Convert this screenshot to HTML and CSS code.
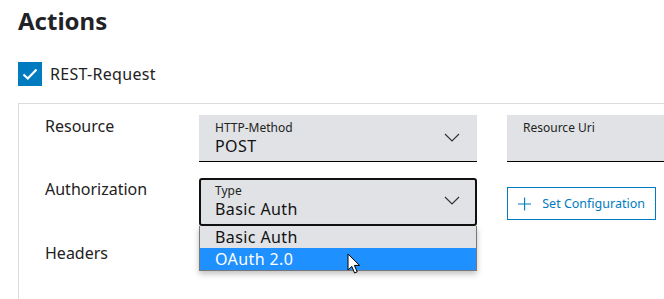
FILE: index.html
```html
<!DOCTYPE html>
<html lang="en">
<head>
    <meta charset="UTF-8">
    <title>Actions</title>
    <link rel="stylesheet" href="styles.css">
</head>
<body>

    <h1>Actions</h1>

    <label class="check">
        <span class="check-box">
            <svg width="16" height="12" viewBox="0 0 16 12"><path d="M1.5 6.5 L5.8 10.5 L14.5 1.5" fill="none" stroke="#fff" stroke-width="2.2"/></svg>
        </span>
        <span>REST-Request</span>
    </label>

    <div class="panel">
        <div class="row">
            <div class="row-label">Resource</div>
            <div class="field">
                <span class="field-label">HTTP-Method</span>
                <span class="field-value">POST</span>
                <svg class="chevron" width="16" height="9" viewBox="0 0 16 9"><path d="M1 1 L8 8 L15 1" fill="none" stroke="#333" stroke-width="1.2"/></svg>
            </div>
            <div class="field field-wide">
                <span class="field-label">Resource Uri</span>
            </div>
        </div>

        <div class="row">
            <div class="row-label">Authorization</div>
            <div class="select-wrap">
                <div class="field field-focus">
                    <span class="field-label">Type</span>
                    <span class="field-value">Basic Auth</span>
                    <svg class="chevron" width="16" height="9" viewBox="0 0 16 9"><path d="M1 1 L8 8 L15 1" fill="none" stroke="#333" stroke-width="1.2"/></svg>
                </div>
                <ul class="options">
                    <li>Basic Auth</li>
                    <li class="active">OAuth 2.0</li>
                </ul>
                <svg class="cursor" width="14" height="22" viewBox="0 0 14 22"><path d="M1 1 L1 17 L4.8 13.4 L7.6 20 L10.2 18.9 L7.4 12.4 L12.6 12.4 Z" fill="#fff" stroke="#000" stroke-width="1"/></svg>
            </div>
            <button class="config-btn">
                <svg width="14" height="14" viewBox="0 0 14 14"><path d="M7 0 V14 M0 7 H14" stroke="#007bc0" stroke-width="1.2"/></svg>
                Set Configuration
            </button>
        </div>

        <div class="row">
            <div class="row-label">Headers</div>
        </div>
    </div>

</body>
</html>
```

FILE: styles.css
```css
body {
    margin: 0;
    padding: 0 0 0 18px;
    font-family: "Noto Sans", Arial, sans-serif;
    color: #222;
    background-color: #fff;
    overflow: hidden;
}
h1 {
    margin: 0;
    padding-top: 5px;
    font-size: 24px;
    line-height: 32px;
    font-weight: 700;
    color: #1f2328;
}
.check {
    display: flex;
    align-items: center;
    gap: 8px;
    margin-top: 25px;
    font-size: 16px;
    letter-spacing: 0.3px;
    color: #222;
}
.check-box {
    width: 24px;
    height: 24px;
    background-color: #007bc0;
    display: flex;
    align-items: center;
    justify-content: center;
}
.panel {
    margin-top: 17px;
    border-top: 1px solid #dcdcdc;
    border-left: 1px solid #dcdcdc;
    padding: 11px 0 0 26px;
    height: 190px;
}
.row {
    display: flex;
    align-items: flex-start;
    margin-bottom: 16px;
}
.row > * {
    flex: none;
}
.row-label {
    width: 154px;
    font-size: 16px;
    line-height: 20px;
    padding-top: 1px;
    color: #222;
}
.field {
    position: relative;
    width: 278px;
    height: 47px;
    box-sizing: border-box;
    background-color: #e0e2e5;
    border-bottom: 1px solid #000;
    padding: 5px 16px 0;
    display: flex;
    flex-direction: column;
}
.field-wide {
    margin-left: 30px;
    width: 157px;
}
.field-focus {
    border: 2px solid #111;
    border-radius: 3px;
    padding: 3px 14px 0;
    height: 48px;
}
.field-label {
    font-size: 12px;
    line-height: 16px;
    color: #222;
}
.field-value {
    font-size: 16px;
    line-height: 21px;
    letter-spacing: 0.4px;
    color: #111;
}
.chevron {
    position: absolute;
    right: 17px;
    top: 18px;
}
.field-focus .chevron {
    right: 15px;
    top: 16px;
}
.select-wrap {
    position: relative;
}
.options {
    position: absolute;
    left: 0;
    top: 48px;
    width: 278px;
    box-sizing: border-box;
    margin: 0;
    padding: 0;
    list-style: none;
    border: 1px solid #777;
    border-top: none;
    box-shadow: 0 3px 6px rgba(0, 0, 0, 0.25);
    font-size: 16px;
    letter-spacing: 0.4px;
    z-index: 2;
}
.options li {
    height: 22px;
    line-height: 22px;
    padding-left: 15px;
    background-color: #e0e2e5;
    color: #111;
}
.options li.active {
    background-color: #1e90ff;
    color: #fff;
}
.cursor {
    position: absolute;
    left: 148px;
    top: 75px;
    z-index: 3;
}
.config-btn {
    margin: 9px 0 0 30px;
    width: 149px;
    height: 33px;
    display: flex;
    align-items: center;
    gap: 11px;
    padding: 0 10px;
    background-color: #fff;
    border: 1px solid #007bc0;
    color: #007bc0;
    font-family: "Noto Sans", Arial, sans-serif;
    font-size: 12.5px;
    white-space: nowrap;
    cursor: pointer;
}
```
